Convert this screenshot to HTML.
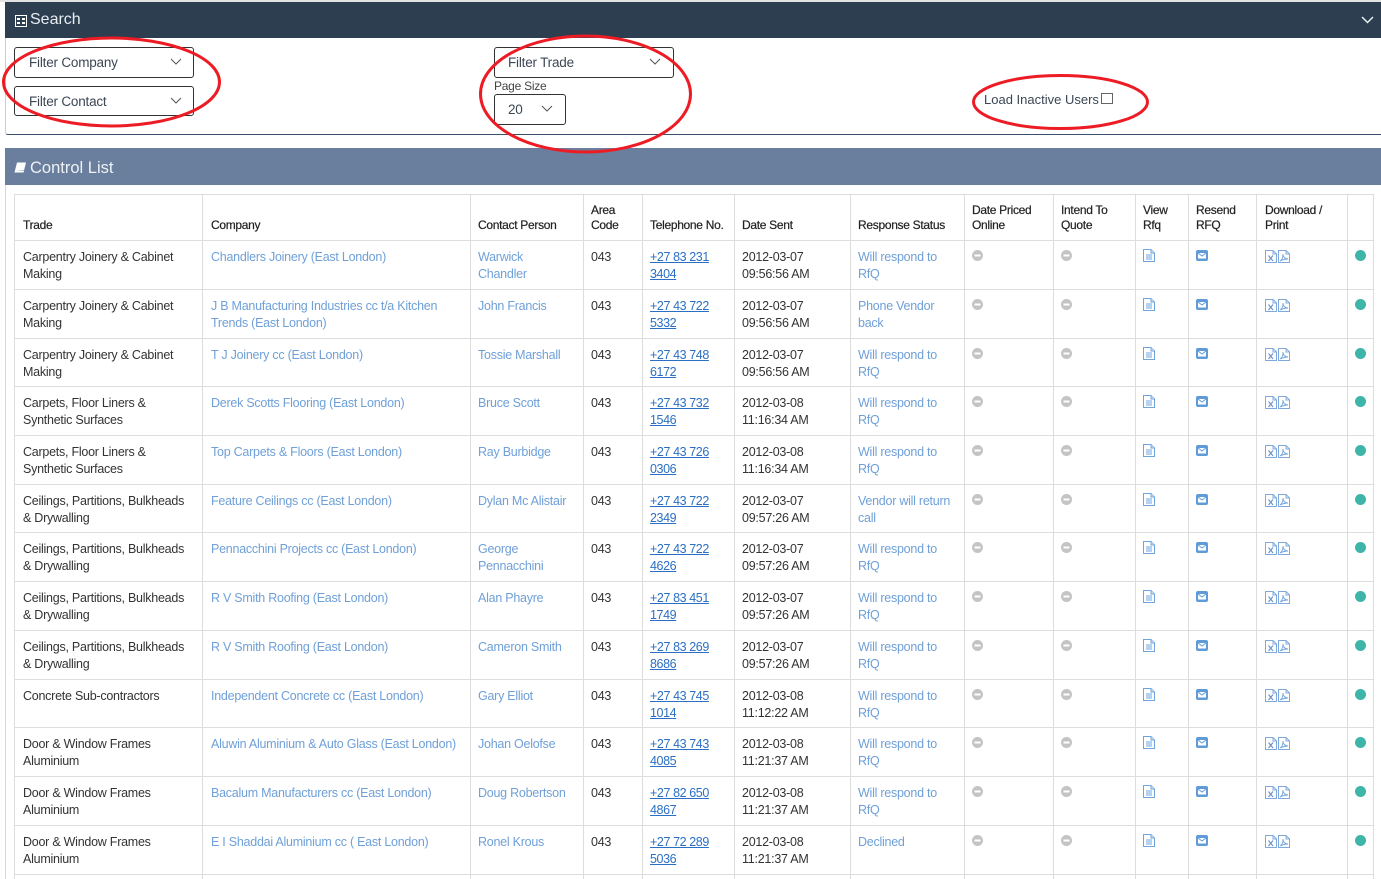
<!DOCTYPE html>
<html><head><meta charset="utf-8"><title>Control List</title>
<style>
html,body{margin:0;padding:0;background:#fff;width:1381px;height:879px;overflow:hidden}
body{font-family:"Liberation Sans",sans-serif;color:#333;font-size:13px}
#w{position:relative;width:1381px;height:879px;overflow:hidden}
.abs{position:absolute}
.sel{position:absolute;box-sizing:border-box;height:31px;border:1px solid #333;border-radius:3px;background:#fff;font-size:13.500px;letter-spacing:-.2px;line-height:30px;padding-left:14px;color:#3c4654}
.sel svg{position:absolute;top:10px}
table{position:absolute;left:14px;top:194px;border-collapse:collapse;table-layout:fixed;width:1360px;background:#fff}
td,th{border:1px solid #ddd;padding:8px 7px 0 8px;vertical-align:top;font-size:12.500px;letter-spacing:-.25px;line-height:17px;font-weight:400;text-align:left;overflow:hidden}
th{vertical-align:bottom;padding:0 3px 7px 8px;font-weight:400;font-size:12px;letter-spacing:-.3px;line-height:15px;color:#222;-webkit-text-stroke:.2px #222}
td:nth-child(n+3),th:nth-child(n+3){padding-left:7px}
td:nth-child(12),th:nth-child(12){padding-left:8px}
td:nth-child(7){padding-right:3px}
td a{color:#6fa0d8;text-decoration:none}
td a.t{color:#2a6fc4;text-decoration:underline;letter-spacing:-.4px}
td svg{display:block}
.i{display:inline-block;vertical-align:top;margin-top:1px}
</style></head><body><div id="w">
<svg width="0" height="0" style="position:absolute"><defs>
<symbol id="m" viewBox="0 0 11 11"><circle cx="5.500" cy="5.500" r="5.500" fill="#c4c4c4"/><rect x="2.500" y="4.500" width="6" height="2" fill="#fff"/></symbol>
<symbol id="d" viewBox="0 0 12 13"><path d="M.5.5h7.500l3.500 3.500v8.500h-11z" fill="#fff" stroke="#6fa5de"/><path d="M8 .5v3.500h3.500" fill="#cfe0f3" stroke="#6fa5de"/><path d="M3 6h6M3 8h6M3 10h6" stroke="#6fa5de"/></symbol>
<symbol id="e" viewBox="0 0 12 11"><rect width="12" height="11" rx="2" fill="#5f9bd8"/><rect x="2" y="3" width="8" height="5.500" fill="#fff"/><path d="M2 3l4 3 4-3" fill="none" stroke="#5f9bd8"/></symbol>
<symbol id="x" viewBox="0 0 12 13"><path d="M.5.500h7.500l3.500 3.500v8.500h-11z" fill="#fff" stroke="#7fa9dc"/><path d="M8 .500v3.500h3.500" fill="none" stroke="#7fa9dc"/><path d="M3.500 5.500l4.500 5.500M8 5.500l-4.500 5.500" stroke="#6b93c8" stroke-width="1.200"/></symbol>
<symbol id="p" viewBox="0 0 12 13"><path d="M.5.500h7.500l3.500 3.500v8.500h-11z" fill="#fff" stroke="#7fa9dc"/><path d="M8 .500v3.500h3.500" fill="none" stroke="#7fa9dc"/><path d="M2 11c2-1 3-4 3-7 0 3 2 5 5 5-3 0-6 1-8 2z" fill="none" stroke="#6fa5de" stroke-width=".9"/></symbol>
<symbol id="c" viewBox="0 0 12 8"><path d="M1 1l5 5 5-5" fill="none" stroke="currentColor" stroke-width="1"/></symbol>
</defs></svg>

<div class="abs" style="left:0;top:0;width:1381px;height:2px;background:#e2e2e2"></div>
<div class="abs" style="left:5px;top:2px;width:1376px;height:36px;background:#2d3e50"></div>
<div class="abs" style="left:5px;top:38px;width:1376px;height:97px;box-sizing:border-box;border-left:1px solid #c9ced6;border-bottom:1px solid #3a4f6a;border-radius:0 0 0 3px"></div>
<svg class="abs" style="left:15px;top:15px" width="12" height="12" viewBox="0 0 12 12"><rect x=".5" y=".5" width="11" height="11" fill="none" stroke="#fff"/><path d="M2 4h3M7 4h3M2 8h3M7 8h3" stroke="#fff" stroke-width="2"/></svg>
<div class="abs" style="left:30px;top:9px;font-size:16px;line-height:22px;color:#e8edf2">Search</div>
<svg class="abs" style="left:1361px;top:16px;color:#e8edf2" width="13" height="8" viewBox="0 0 13 8"><path d="M1 1l5.500 5.500L12 1" fill="none" stroke="currentColor" stroke-width="1.500"/></svg>

<div class="sel" style="left:14px;top:47px;width:180px">Filter Company<svg style="left:155px;color:#555" width="12" height="8"><use href="#c"/></svg></div>
<div class="sel" style="left:14px;top:86px;width:180px;height:30px">Filter Contact<svg style="left:155px;color:#555" width="12" height="8"><use href="#c"/></svg></div>
<div class="sel" style="left:494px;top:47px;width:180px;padding-left:13px">Filter Trade<svg style="left:154px;color:#555" width="12" height="8"><use href="#c"/></svg></div>
<div class="abs" style="left:494px;top:79px;font-size:12px;letter-spacing:-.25px;line-height:15px;color:#444">Page Size</div>
<div class="sel" style="left:494px;top:94px;width:72px;padding-left:13px">20<svg style="left:46px;color:#555" width="12" height="8"><use href="#c"/></svg></div>
<div class="abs" style="left:984px;top:91px;font-size:13px;line-height:17px;color:#3c4654">Load Inactive Users</div>
<div class="abs" style="left:1101px;top:93px;width:12px;height:11px;box-sizing:border-box;border:1px solid #666"></div>

<div class="abs" style="left:5px;top:148px;width:1376px;height:37px;background:#697f9d"></div>
<div class="abs" style="left:5px;top:185px;width:1px;height:694px;background:#d5d9df"></div>
<svg class="abs" style="left:14px;top:162px" width="12" height="11" viewBox="0 0 12 11"><path d="M3 .5h9l-2 8H1z" fill="#fff"/><path d="M1 8.500l-.5 2h9l.5-1.500" fill="#fff"/></svg>
<div class="abs" style="left:30px;top:157px;font-size:16.500px;line-height:22px;color:#eef1f5">Control List</div>

<table>
<colgroup><col style="width:188px"><col style="width:268px"><col style="width:113px"><col style="width:59px"><col style="width:92px"><col style="width:116px"><col style="width:114px"><col style="width:89px"><col style="width:82px"><col style="width:53px"><col style="width:68px"><col style="width:91px"><col style="width:26px"></colgroup>
<tr style="height:46px"><th>Trade</th><th>Company</th><th>Contact Person</th><th>Area<br>Code</th><th>Telephone No.</th><th>Date Sent</th><th>Response Status</th><th>Date Priced<br>Online</th><th>Intend To<br>Quote</th><th>View<br>Rfq</th><th>Resend<br>RFQ</th><th>Download /<br>Print</th><th></th></tr>

<tr style="height:49px"><td>Carpentry Joinery &amp; Cabinet<br>Making</td><td><a>Chandlers Joinery (East London)</a></td><td><a>Warwick<br>Chandler</a></td><td>043</td><td><a class="t">+27 83 231<br>3404</a></td><td>2012-03-07<br>09:56:56 AM</td><td><a>Will respond to<br>RfQ</a></td><td><svg width="11" height="11" style="margin-top:1px"><use href="#m"/></svg></td><td><svg width="11" height="11" style="margin-top:1px"><use href="#m"/></svg></td><td><svg width="12" height="13"><use href="#d"/></svg></td><td><svg width="12" height="11" style="margin-top:1px"><use href="#e"/></svg></td><td><svg class="i" width="12" height="13"><use href="#x"/></svg><svg class="i" width="12" height="13" style="margin-left:1px"><use href="#p"/></svg></td><td style="padding-left:7px;padding-right:0"><svg width="11" height="11" style="margin-top:1px"><circle cx="5.500" cy="5.500" r="5.500" fill="#3eb5a8"/></svg></td></tr>

<tr style="height:49px"><td>Carpentry Joinery &amp; Cabinet<br>Making</td><td><a>J B Manufacturing Industries cc t/a Kitchen<br>Trends (East London)</a></td><td><a>John Francis</a></td><td>043</td><td><a class="t">+27 43 722<br>5332</a></td><td>2012-03-07<br>09:56:56 AM</td><td><a>Phone Vendor<br>back</a></td><td><svg width="11" height="11" style="margin-top:1px"><use href="#m"/></svg></td><td><svg width="11" height="11" style="margin-top:1px"><use href="#m"/></svg></td><td><svg width="12" height="13"><use href="#d"/></svg></td><td><svg width="12" height="11" style="margin-top:1px"><use href="#e"/></svg></td><td><svg class="i" width="12" height="13"><use href="#x"/></svg><svg class="i" width="12" height="13" style="margin-left:1px"><use href="#p"/></svg></td><td style="padding-left:7px;padding-right:0"><svg width="11" height="11" style="margin-top:1px"><circle cx="5.500" cy="5.500" r="5.500" fill="#3eb5a8"/></svg></td></tr>

<tr style="height:48px"><td>Carpentry Joinery &amp; Cabinet<br>Making</td><td><a>T J Joinery cc (East London)</a></td><td><a>Tossie Marshall</a></td><td>043</td><td><a class="t">+27 43 748<br>6172</a></td><td>2012-03-07<br>09:56:56 AM</td><td><a>Will respond to<br>RfQ</a></td><td><svg width="11" height="11" style="margin-top:1px"><use href="#m"/></svg></td><td><svg width="11" height="11" style="margin-top:1px"><use href="#m"/></svg></td><td><svg width="12" height="13"><use href="#d"/></svg></td><td><svg width="12" height="11" style="margin-top:1px"><use href="#e"/></svg></td><td><svg class="i" width="12" height="13"><use href="#x"/></svg><svg class="i" width="12" height="13" style="margin-left:1px"><use href="#p"/></svg></td><td style="padding-left:7px;padding-right:0"><svg width="11" height="11" style="margin-top:1px"><circle cx="5.500" cy="5.500" r="5.500" fill="#3eb5a8"/></svg></td></tr>

<tr style="height:49px"><td>Carpets, Floor Liners &amp;<br>Synthetic Surfaces</td><td><a>Derek Scotts Flooring (East London)</a></td><td><a>Bruce Scott</a></td><td>043</td><td><a class="t">+27 43 732<br>1546</a></td><td>2012-03-08<br>11:16:34 AM</td><td><a>Will respond to<br>RfQ</a></td><td><svg width="11" height="11" style="margin-top:1px"><use href="#m"/></svg></td><td><svg width="11" height="11" style="margin-top:1px"><use href="#m"/></svg></td><td><svg width="12" height="13"><use href="#d"/></svg></td><td><svg width="12" height="11" style="margin-top:1px"><use href="#e"/></svg></td><td><svg class="i" width="12" height="13"><use href="#x"/></svg><svg class="i" width="12" height="13" style="margin-left:1px"><use href="#p"/></svg></td><td style="padding-left:7px;padding-right:0"><svg width="11" height="11" style="margin-top:1px"><circle cx="5.500" cy="5.500" r="5.500" fill="#3eb5a8"/></svg></td></tr>

<tr style="height:49px"><td>Carpets, Floor Liners &amp;<br>Synthetic Surfaces</td><td><a>Top Carpets &amp; Floors (East London)</a></td><td><a>Ray Burbidge</a></td><td>043</td><td><a class="t">+27 43 726<br>0306</a></td><td>2012-03-08<br>11:16:34 AM</td><td><a>Will respond to<br>RfQ</a></td><td><svg width="11" height="11" style="margin-top:1px"><use href="#m"/></svg></td><td><svg width="11" height="11" style="margin-top:1px"><use href="#m"/></svg></td><td><svg width="12" height="13"><use href="#d"/></svg></td><td><svg width="12" height="11" style="margin-top:1px"><use href="#e"/></svg></td><td><svg class="i" width="12" height="13"><use href="#x"/></svg><svg class="i" width="12" height="13" style="margin-left:1px"><use href="#p"/></svg></td><td style="padding-left:7px;padding-right:0"><svg width="11" height="11" style="margin-top:1px"><circle cx="5.500" cy="5.500" r="5.500" fill="#3eb5a8"/></svg></td></tr>

<tr style="height:48px"><td>Ceilings, Partitions, Bulkheads<br>&amp; Drywalling</td><td><a>Feature Ceilings cc (East London)</a></td><td><a>Dylan Mc Alistair</a></td><td>043</td><td><a class="t">+27 43 722<br>2349</a></td><td>2012-03-07<br>09:57:26 AM</td><td><a>Vendor will return<br>call</a></td><td><svg width="11" height="11" style="margin-top:1px"><use href="#m"/></svg></td><td><svg width="11" height="11" style="margin-top:1px"><use href="#m"/></svg></td><td><svg width="12" height="13"><use href="#d"/></svg></td><td><svg width="12" height="11" style="margin-top:1px"><use href="#e"/></svg></td><td><svg class="i" width="12" height="13"><use href="#x"/></svg><svg class="i" width="12" height="13" style="margin-left:1px"><use href="#p"/></svg></td><td style="padding-left:7px;padding-right:0"><svg width="11" height="11" style="margin-top:1px"><circle cx="5.500" cy="5.500" r="5.500" fill="#3eb5a8"/></svg></td></tr>

<tr style="height:49px"><td>Ceilings, Partitions, Bulkheads<br>&amp; Drywalling</td><td><a>Pennacchini Projects cc (East London)</a></td><td><a>George<br>Pennacchini</a></td><td>043</td><td><a class="t">+27 43 722<br>4626</a></td><td>2012-03-07<br>09:57:26 AM</td><td><a>Will respond to<br>RfQ</a></td><td><svg width="11" height="11" style="margin-top:1px"><use href="#m"/></svg></td><td><svg width="11" height="11" style="margin-top:1px"><use href="#m"/></svg></td><td><svg width="12" height="13"><use href="#d"/></svg></td><td><svg width="12" height="11" style="margin-top:1px"><use href="#e"/></svg></td><td><svg class="i" width="12" height="13"><use href="#x"/></svg><svg class="i" width="12" height="13" style="margin-left:1px"><use href="#p"/></svg></td><td style="padding-left:7px;padding-right:0"><svg width="11" height="11" style="margin-top:1px"><circle cx="5.500" cy="5.500" r="5.500" fill="#3eb5a8"/></svg></td></tr>

<tr style="height:49px"><td>Ceilings, Partitions, Bulkheads<br>&amp; Drywalling</td><td><a>R V Smith Roofing (East London)</a></td><td><a>Alan Phayre</a></td><td>043</td><td><a class="t">+27 83 451<br>1749</a></td><td>2012-03-07<br>09:57:26 AM</td><td><a>Will respond to<br>RfQ</a></td><td><svg width="11" height="11" style="margin-top:1px"><use href="#m"/></svg></td><td><svg width="11" height="11" style="margin-top:1px"><use href="#m"/></svg></td><td><svg width="12" height="13"><use href="#d"/></svg></td><td><svg width="12" height="11" style="margin-top:1px"><use href="#e"/></svg></td><td><svg class="i" width="12" height="13"><use href="#x"/></svg><svg class="i" width="12" height="13" style="margin-left:1px"><use href="#p"/></svg></td><td style="padding-left:7px;padding-right:0"><svg width="11" height="11" style="margin-top:1px"><circle cx="5.500" cy="5.500" r="5.500" fill="#3eb5a8"/></svg></td></tr>

<tr style="height:49px"><td>Ceilings, Partitions, Bulkheads<br>&amp; Drywalling</td><td><a>R V Smith Roofing (East London)</a></td><td><a>Cameron Smith</a></td><td>043</td><td><a class="t">+27 83 269<br>8686</a></td><td>2012-03-07<br>09:57:26 AM</td><td><a>Will respond to<br>RfQ</a></td><td><svg width="11" height="11" style="margin-top:1px"><use href="#m"/></svg></td><td><svg width="11" height="11" style="margin-top:1px"><use href="#m"/></svg></td><td><svg width="12" height="13"><use href="#d"/></svg></td><td><svg width="12" height="11" style="margin-top:1px"><use href="#e"/></svg></td><td><svg class="i" width="12" height="13"><use href="#x"/></svg><svg class="i" width="12" height="13" style="margin-left:1px"><use href="#p"/></svg></td><td style="padding-left:7px;padding-right:0"><svg width="11" height="11" style="margin-top:1px"><circle cx="5.500" cy="5.500" r="5.500" fill="#3eb5a8"/></svg></td></tr>

<tr style="height:48px"><td>Concrete Sub-contractors</td><td><a>Independent Concrete cc (East London)</a></td><td><a>Gary Elliot</a></td><td>043</td><td><a class="t">+27 43 745<br>1014</a></td><td>2012-03-08<br>11:12:22 AM</td><td><a>Will respond to<br>RfQ</a></td><td><svg width="11" height="11" style="margin-top:1px"><use href="#m"/></svg></td><td><svg width="11" height="11" style="margin-top:1px"><use href="#m"/></svg></td><td><svg width="12" height="13"><use href="#d"/></svg></td><td><svg width="12" height="11" style="margin-top:1px"><use href="#e"/></svg></td><td><svg class="i" width="12" height="13"><use href="#x"/></svg><svg class="i" width="12" height="13" style="margin-left:1px"><use href="#p"/></svg></td><td style="padding-left:7px;padding-right:0"><svg width="11" height="11" style="margin-top:1px"><circle cx="5.500" cy="5.500" r="5.500" fill="#3eb5a8"/></svg></td></tr>

<tr style="height:49px"><td>Door &amp; Window Frames<br>Aluminium</td><td><a>Aluwin Aluminium &amp; Auto Glass (East London)</a></td><td><a>Johan Oelofse</a></td><td>043</td><td><a class="t">+27 43 743<br>4085</a></td><td>2012-03-08<br>11:21:37 AM</td><td><a>Will respond to<br>RfQ</a></td><td><svg width="11" height="11" style="margin-top:1px"><use href="#m"/></svg></td><td><svg width="11" height="11" style="margin-top:1px"><use href="#m"/></svg></td><td><svg width="12" height="13"><use href="#d"/></svg></td><td><svg width="12" height="11" style="margin-top:1px"><use href="#e"/></svg></td><td><svg class="i" width="12" height="13"><use href="#x"/></svg><svg class="i" width="12" height="13" style="margin-left:1px"><use href="#p"/></svg></td><td style="padding-left:7px;padding-right:0"><svg width="11" height="11" style="margin-top:1px"><circle cx="5.500" cy="5.500" r="5.500" fill="#3eb5a8"/></svg></td></tr>

<tr style="height:49px"><td>Door &amp; Window Frames<br>Aluminium</td><td><a>Bacalum Manufacturers cc (East London)</a></td><td><a>Doug Robertson</a></td><td>043</td><td><a class="t">+27 82 650<br>4867</a></td><td>2012-03-08<br>11:21:37 AM</td><td><a>Will respond to<br>RfQ</a></td><td><svg width="11" height="11" style="margin-top:1px"><use href="#m"/></svg></td><td><svg width="11" height="11" style="margin-top:1px"><use href="#m"/></svg></td><td><svg width="12" height="13"><use href="#d"/></svg></td><td><svg width="12" height="11" style="margin-top:1px"><use href="#e"/></svg></td><td><svg class="i" width="12" height="13"><use href="#x"/></svg><svg class="i" width="12" height="13" style="margin-left:1px"><use href="#p"/></svg></td><td style="padding-left:7px;padding-right:0"><svg width="11" height="11" style="margin-top:1px"><circle cx="5.500" cy="5.500" r="5.500" fill="#3eb5a8"/></svg></td></tr>

<tr style="height:49px"><td>Door &amp; Window Frames<br>Aluminium</td><td><a>E I Shaddai Aluminium cc ( East London)</a></td><td><a>Ronel Krous</a></td><td>043</td><td><a class="t">+27 72 289<br>5036</a></td><td>2012-03-08<br>11:21:37 AM</td><td><a>Declined</a></td><td><svg width="11" height="11" style="margin-top:1px"><use href="#m"/></svg></td><td><svg width="11" height="11" style="margin-top:1px"><use href="#m"/></svg></td><td><svg width="12" height="13"><use href="#d"/></svg></td><td><svg width="12" height="11" style="margin-top:1px"><use href="#e"/></svg></td><td><svg class="i" width="12" height="13"><use href="#x"/></svg><svg class="i" width="12" height="13" style="margin-left:1px"><use href="#p"/></svg></td><td style="padding-left:7px;padding-right:0"><svg width="11" height="11" style="margin-top:1px"><circle cx="5.500" cy="5.500" r="5.500" fill="#3eb5a8"/></svg></td></tr>

<tr style="height:20px"><td></td><td></td><td></td><td></td><td></td><td></td><td></td><td></td><td></td><td></td><td></td><td></td><td></td></tr>
</table>

<svg class="abs" style="left:0;top:0" width="1381" height="200" fill="none" stroke="#ed1c24" stroke-width="3">
<ellipse cx="111.500" cy="82" rx="108" ry="44"/>
<ellipse cx="585.500" cy="94" rx="105" ry="58"/>
<ellipse cx="1060.500" cy="102" rx="87" ry="26.500"/>
</svg>
</div></body></html>
